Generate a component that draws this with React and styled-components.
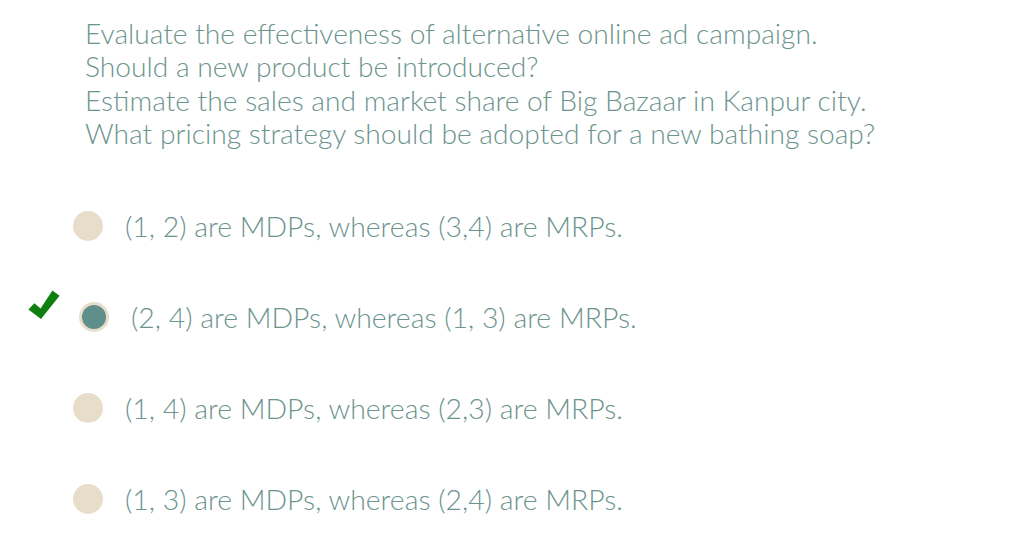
import React from 'react';
import styled, { createGlobalStyle } from 'styled-components';

const GlobalStyle = createGlobalStyle`
  html, body {
    margin: 0;
    padding: 0;
    background: #ffffff;
  }
  body {
    font-family: Lato, "Open Sans", sans-serif;
  }
`;

const Page = styled.div`
  width: 1011px;
  min-height: 537px;
  box-sizing: border-box;
  padding-top: 17px;
`;

const Question = styled.div`
  padding-left: 85px;
  font-size: 28.2px;
  font-weight: 300;
  line-height: 33.3px;
  color: #6c948e;
`;

const Options = styled.ul`
  list-style: none;
  margin: 30px 0 0;
  padding: 0;
`;

const Option = styled.li`
  position: relative;
  display: flex;
  align-items: center;
  gap: 22px;
  height: 91px;
  padding-left: ${(p) => (p.$selected ? 79 : 73)}px;
`;

const Radio = styled.span`
  flex: none;
  width: 30px;
  height: 30px;
  border-radius: 50%;
  box-sizing: border-box;
  background: ${(p) => (p.$checked ? '#5f8f8a' : '#e8dcca')};
  border: ${(p) => (p.$checked ? '3px solid #e8dcca' : 'none')};
`;

const Label = styled.span`
  font-size: 28.4px;
  font-weight: 300;
  color: #6c948e;
`;

const Check = styled.svg`
  position: absolute;
  left: 28px;
  top: 19px;
  width: 32px;
  height: 29px;
`;

const options = [
  '(1, 2) are MDPs, whereas (3,4) are MRPs.',
  '(2, 4) are MDPs, whereas (1, 3) are MRPs.',
  '(1, 4) are MDPs, whereas (2,3) are MRPs.',
  '(1, 3) are MDPs, whereas (2,4) are MRPs.',
];

const CORRECT = 1;

export default function App() {
  return (
    <>
      <GlobalStyle />
      <Page>
        <Question>
          Evaluate the effectiveness of alternative online ad campaign.
          <br />
          Should a new product be introduced?
          <br />
          Estimate the sales and market share of Big Bazaar in Kanpur city.
          <br />
          What pricing strategy should be adopted for a new bathing soap?
        </Question>
        <Options>
          {options.map((text, i) => (
            <Option key={text} $selected={i === CORRECT}>
              {i === CORRECT && (
                <Check viewBox="0 0 32 29">
                  <polygon
                    points="6.4,13.2 12.6,18.6 24.4,0.6 31.6,5.8 13,29 0.4,19.6"
                    fill="#0f800f"
                  />
                </Check>
              )}
              <Radio $checked={i === CORRECT} />
              <Label>{text}</Label>
            </Option>
          ))}
        </Options>
      </Page>
    </>
  );
}
